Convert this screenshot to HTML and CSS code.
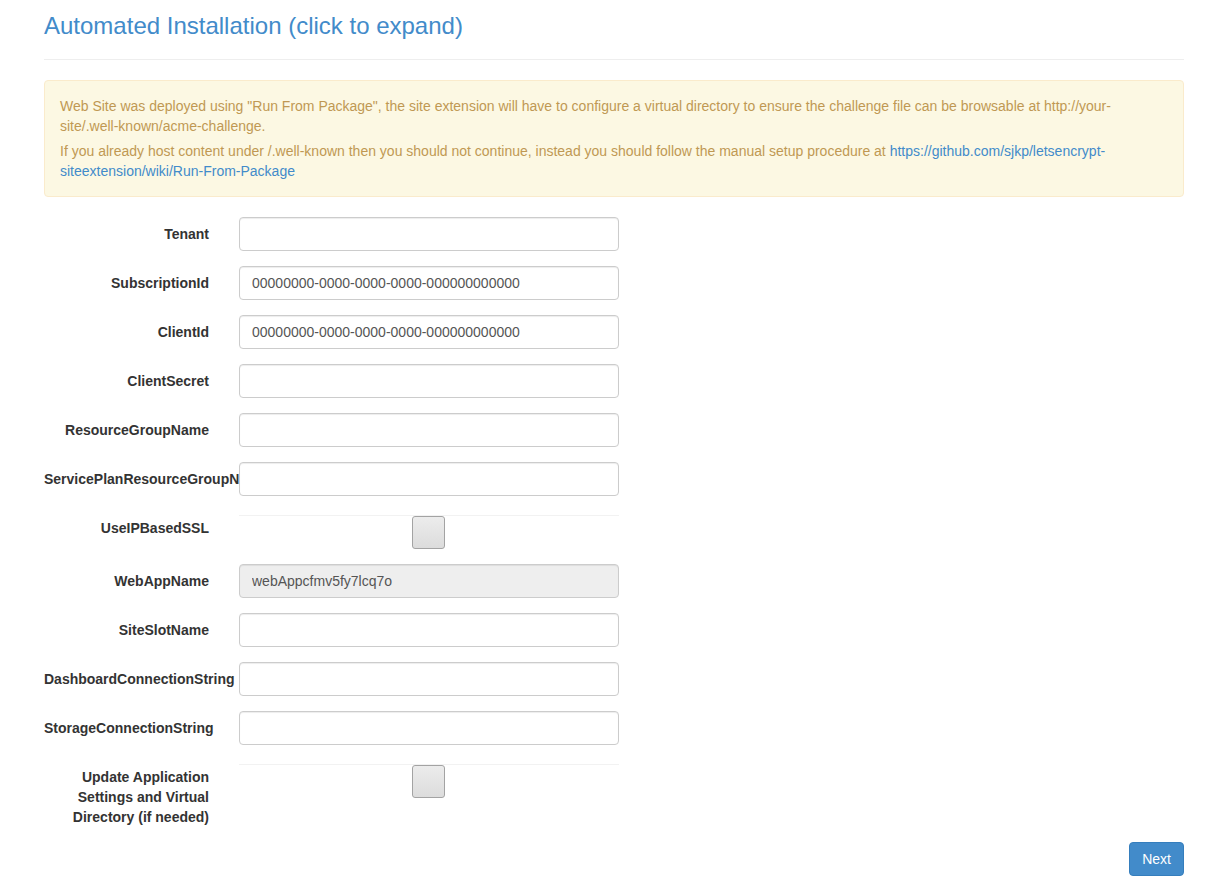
FILE: index.html
```html
<!DOCTYPE html>
<html>
<head>
<meta charset="utf-8">
<title>Automated Installation</title>
<link rel="stylesheet" href="styles.css">
</head>
<body>
<div class="page">
  <h3 class="title">Automated Installation (click to expand)</h3>
  <hr class="divider">
  <div class="alert">
    <p>Web Site was deployed using "Run From Package", the site extension will have to configure a virtual directory to ensure the challenge file can be browsable at http://your-site/.well-known/acme-challenge.</p>
    <p>If you already host content under /.well-known then you should not continue, instead you should follow the manual setup procedure at <a href="#">https://github.com/sjkp/letsencrypt-siteextension/wiki/Run-From-Package</a></p>
  </div>
  <form class="form">
    <div class="group"><label class="label">Tenant</label><div class="field"><input class="control" type="text" value=""></div></div>
    <div class="group"><label class="label">SubscriptionId</label><div class="field"><input class="control" type="text" value="00000000-0000-0000-0000-000000000000"></div></div>
    <div class="group"><label class="label">ClientId</label><div class="field"><input class="control" type="text" value="00000000-0000-0000-0000-000000000000"></div></div>
    <div class="group"><label class="label">ClientSecret</label><div class="field"><input class="control" type="text" value=""></div></div>
    <div class="group"><label class="label">ResourceGroupName</label><div class="field"><input class="control" type="text" value=""></div></div>
    <div class="group"><label class="label">ServicePlanResourceGroupName</label><div class="field"><input class="control" type="text" value=""></div></div>
    <div class="group"><label class="label">UseIPBasedSSL</label><div class="field"><div class="check-wrap"><span class="check"></span></div></div></div>
    <div class="group"><label class="label">WebAppName</label><div class="field"><input class="control disabled" type="text" value="webAppcfmv5fy7lcq7o" disabled></div></div>
    <div class="group"><label class="label">SiteSlotName</label><div class="field"><input class="control" type="text" value=""></div></div>
    <div class="group"><label class="label">DashboardConnectionString</label><div class="field"><input class="control" type="text" value=""></div></div>
    <div class="group"><label class="label">StorageConnectionString</label><div class="field"><input class="control" type="text" value=""></div></div>
    <div class="group"><label class="label">Update Application Settings and Virtual Directory (if needed)</label><div class="field"><div class="check-wrap"><span class="check"></span></div></div></div>
    <div class="actions"><button class="btn" type="button">Next</button></div>
  </form>
</div>
</body>
</html>
```

FILE: styles.css
```css
* { box-sizing: border-box; }
html, body {
  margin: 0;
  padding: 0;
  background: #fff;
}
body {
  font-family: "Liberation Sans", Arial, Helvetica, sans-serif;
  font-size: 14px;
  line-height: 20px;
  color: #333;
}
.page {
  padding: 0 25px 0 44px;
}
.title {
  margin: 0;
  padding-top: 13px;
  font-size: 24px;
  font-weight: 500;
  line-height: 26.4px;
  color: #428bca;
}
.divider {
  margin: 20px 0 20px 0;
  border: 0;
  border-top: 1px solid #eee;
  height: 0;
}
.alert {
  background: #fcf8e3;
  border: 1px solid #faebcc;
  border-radius: 4px;
  padding: 15px;
  color: #c09853;
  margin-bottom: 20px;
}
.alert p { margin: 0; }
.alert p + p { margin-top: 5px; }
.alert a { color: #428bca; text-decoration: none; }
.form { margin: 0; }
.group {
  display: grid;
  grid-template-columns: 195px 380px;
  margin-bottom: 15px;
}
.label {
  padding: 7px 30px 0 0;
  text-align: right;
  font-weight: bold;
  overflow: hidden;
  white-space: normal;
}
.control {
  display: block;
  width: 100%;
  height: 34px;
  padding: 6px 12px;
  font-family: inherit;
  font-size: 14px;
  line-height: 20px;
  color: #555;
  background: #fff;
  border: 1px solid #ccc;
  border-radius: 4px;
  box-shadow: inset 0 1px 1px rgba(0,0,0,0.075);
  outline: none;
}
.control.disabled {
  background: #eee;
  color: #555;
  opacity: 1;
}
.check-wrap {
  margin-top: 4px;
  height: 34px;
  padding-right: 2px;
  border-top: 1px solid #f2f2f2;
  display: flex;
  justify-content: center;
}
.check {
  display: block;
  width: 33px;
  height: 33px;
  border: 1px solid #a3a3a3;
  border-radius: 3px;
  background: linear-gradient(#ececec, #dcdcdc);
}
.actions {
  display: flex;
  justify-content: flex-end;
}
.btn {
  font-family: inherit;
  font-size: 14px;
  line-height: 20px;
  padding: 6px 12px;
  color: #fff;
  background: #428bca;
  border: 1px solid #357ebd;
  border-radius: 4px;
  cursor: pointer;
}
```
